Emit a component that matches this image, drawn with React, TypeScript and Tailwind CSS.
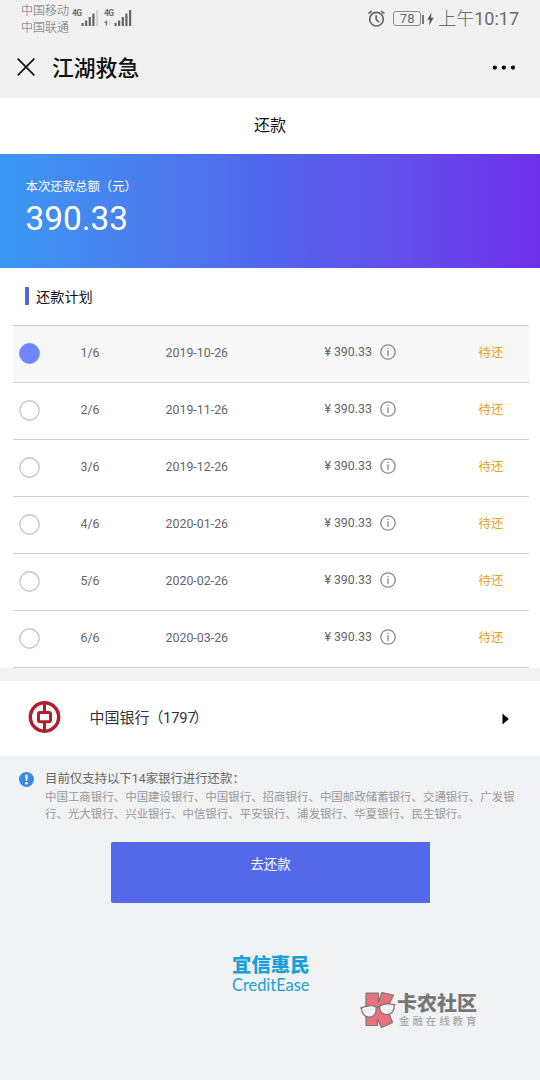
import React from 'react';

interface Installment {
  term: string;
  date: string;
  amount: string;
  active?: boolean;
}

const installments: Installment[] = [
  { term: '1/6', date: '2019-10-26', amount: '390.33', active: true },
  { term: '2/6', date: '2019-11-26', amount: '390.33' },
  { term: '3/6', date: '2019-12-26', amount: '390.33' },
  { term: '4/6', date: '2020-01-26', amount: '390.33' },
  { term: '5/6', date: '2020-02-26', amount: '390.33' },
  { term: '6/6', date: '2020-03-26', amount: '390.33' },
];

function SignalBars({ weak }: { weak?: boolean }) {
  return (
    <svg width="18" height="18" viewBox="0 0 18 18" fill="#666">
      <rect x="0.5" y="14" width="2.2" height="3" />
      <rect x="4" y="11.5" width="2.2" height="5.5" />
      <rect x="7.7" y="8" width="2.2" height="9" />
      <rect x="11.3" y="4.5" width="2.2" height="12.5" />
      <rect x="15" y="1" width="2.2" height="16" fill={weak ? '#d2d2d2' : '#666'} />
    </svg>
  );
}

function StatusBar() {
  return (
    <div className="flex h-[38px] justify-between pl-[21px] pr-[21px] text-[#6b6b6b]">
      <div className="flex">
        <div className="w-[51px] pt-[3px] text-[12px] leading-[16.5px] font-light whitespace-nowrap">
          <div>中国移动</div>
          <div>中国联通</div>
        </div>
        <div className="flex pt-[9px]">
          <span className="w-[9px] text-[8.5px] leading-[9px] font-bold tracking-[-0.7px]">4G</span>
          <SignalBars weak />
        </div>
        <div className="flex pt-[9px] pl-[5px]">
          <div className="w-[10px]">
            <div className="text-[8.5px] leading-[9px] font-bold tracking-[-0.7px]">4G</div>
            <svg className="mt-[2px]" width="8" height="6" viewBox="0 0 8 6">
              <path d="M0 3 3 0V5.5H1.8V3Z" fill="#666" />
              <path d="M5 0.5V5.5L7.5 3.5H6V0.5Z" fill="#ccc" />
            </svg>
          </div>
          <SignalBars />
        </div>
      </div>
      <div className="flex items-center">
        <svg width="18" height="18" viewBox="0 0 18 18" fill="none" stroke="#666" strokeWidth="1.7">
          <circle cx="9.5" cy="9.2" r="6.8" />
          <path d="M9.2 5.2V9.5L12 12.1M1.5 3.6 4.7 1M17.3 3.6 14.1 1" />
        </svg>
        <div className="mb-[1px] ml-[8px] flex h-[15px] w-[28px] items-center justify-center rounded-[3px] border border-[#8a8a8a] text-[13px] leading-none">
          78
        </div>
        <div className="ml-[1px] h-[9px] w-[2px] bg-[#777]" />
        <svg className="ml-[3px]" width="7" height="14" viewBox="0 0 7 14" fill="#555">
          <path d="M4.5 0.5 0.3 7.8H2.8L2 13.5 6.7 5.8H4Z" />
        </svg>
        <span className="ml-[4px] text-[18px] leading-[24px] font-light whitespace-nowrap">
          上午<span className="font-normal">10:17</span>
        </span>
      </div>
    </div>
  );
}

function AppHeader() {
  return (
    <div className="flex h-[60px] items-center pl-[17px] pr-[24px]">
      <svg className="mb-[2px]" width="18" height="18" viewBox="0 0 18 18" stroke="#111" strokeWidth="1.7">
        <path d="M0.7 0.7 17.3 17.3M17.3 0.7 0.7 17.3" />
      </svg>
      <h1 className="ml-[17px] flex-1 pt-[1px] text-[21.8px] leading-[30px] font-medium text-[#111]">江湖救急</h1>
      <svg width="24" height="6" viewBox="0 0 24 6" fill="#000">
        <circle cx="2.8" cy="2.6" r="2.1" />
        <circle cx="11.9" cy="2.6" r="2.1" />
        <circle cx="21" cy="2.6" r="2.1" />
      </svg>
    </div>
  );
}

function InfoIcon() {
  return (
    <svg width="16" height="16" viewBox="0 0 16 16" fill="none" stroke="#888" strokeWidth="1.3">
      <circle cx="8" cy="8" r="7.2" />
      <path d="M8 6.3V12M8 3.8V5.1" />
    </svg>
  );
}

function RadioDot({ active }: { active?: boolean }) {
  return (
    <svg width="21" height="21" viewBox="0 0 21 21" strokeWidth="1.4">
      <circle
        cx="10.5"
        cy="10.5"
        r="9.7"
        fill={active ? '#7185ff' : '#fff'}
        stroke={active ? '#7185ff' : '#c8c8c8'}
      />
    </svg>
  );
}

function InstallmentRow({ item }: { item: Installment }) {
  return (
    <div
      className={`flex h-[57px] items-center border-t border-[#d0d0d0] pb-[2px] pl-[6px] text-[12.4px] leading-[16px] text-[#666] ${
        item.active ? 'bg-[#f7f7f7]' : 'bg-white'
      }`}
    >
      <RadioDot active={item.active} />
      <div className="ml-[40.5px] w-[85px] pb-[1px]">{item.term}</div>
      <div className="w-[157px] pb-[1px]">{item.date}</div>
      <div className="flex w-[49.5px] justify-end pb-[2px] whitespace-nowrap">
        <span className="mr-[3px]">¥</span>
        <span>{item.amount}</span>
      </div>
      <div className="ml-[8px] pb-[2px]">
        <InfoIcon />
      </div>
      <div className="ml-[82.5px] pb-[1px] text-[#e8a020]">待还</div>
    </div>
  );
}

function BankLogo() {
  return (
    <svg className="mb-[3px]" width="33" height="32" viewBox="0 0 33 32" fill="none" stroke="#b1202a">
      <circle cx="16.5" cy="16" r="14.2" strokeWidth="3.4" />
      <path d="M16.5 2V11M16.5 21V30" strokeWidth="3" />
      <rect x="10.5" y="11.4" width="12" height="9.4" rx="1.5" strokeWidth="3" />
    </svg>
  );
}

function CommunityMark() {
  return (
    <svg width="36" height="38" viewBox="0 0 36 38" stroke="#777" strokeWidth="1.2">
      <path
        d="M6 2H18.5V11L22 1.5 33.5 4 27 17.5 32.5 31.5 21.5 36.5 17.5 28V34.5H6Z"
        fill="#e8727b"
        strokeLinejoin="round"
      />
      <path d="M1.5 17C5 14.5 13 14 16 16 17 22 14 26 9 26 4 26 1.5 22 1.5 17Z" fill="#f3f1f2" />
      <path d="M19.5 15.5C23 12.5 31 12 34 14 35 19 32 23.5 27 23.5 22 23.5 19.5 20.5 19.5 15.5Z" fill="#f3f1f2" />
      <path d="M0 17 2 17M16 17 20 16M34 14 35.5 13" fill="none" />
    </svg>
  );
}

export default function App() {
  return (
    <div className="flex h-[1080px] w-[540px] flex-col overflow-hidden bg-[#f0f2f4] font-['Roboto','Noto_Sans_CJK_SC',sans-serif]">
      <div className="bg-[#f1f1f1]">
        <StatusBar />
        <AppHeader />
      </div>

      <div className="flex h-[56px] items-center justify-center bg-white text-[16px] text-[#111]">还款</div>

      <div className="h-[114px] bg-linear-to-r from-[#3a98f1] via-[#5264ec] to-[#6d2fe8] pt-[24px] pl-[25.5px] text-white">
        <div className="text-[12.4px] leading-[18px]">本次还款总额（元）</div>
        <div className="mt-[2px] text-[33.3px] leading-[42px]">390.33</div>
      </div>

      <div className="bg-white pr-[11px] pl-[13px]">
        <div className="flex h-[57px] items-center pl-[12px]">
          <div className="mb-[2px] h-[18px] w-[4px] bg-[#5468e0]" />
          <span className="ml-[7px] text-[14.2px] leading-[20px] text-[#111]">还款计划</span>
        </div>
        <div className="border-b border-[#d0d0d0]">
          {installments.map((item) => (
            <InstallmentRow key={item.term} item={item} />
          ))}
        </div>
      </div>

      {/* 银行卡 */}
      <div className="mt-[13px] flex h-[75px] items-center bg-white pr-[31px] pl-[28px]">
        <BankLogo />
        <span className="ml-[28.5px] flex-1 pb-[1px] text-[15px] leading-[22px] text-[#333]">
          中国银行<span className="ml-[-1px]">（</span>
          <span className="ml-[-0.5px] text-[14.8px] tracking-[-0.2px]">1797</span>
          <span className="ml-[-2px]">）</span>
        </span>
        <svg width="7" height="12" viewBox="0 0 7 12">
          <path d="M0.5 0.5 6.8 6 0.5 11.5Z" fill="#000" />
        </svg>
      </div>

      <div className="flex pt-[14px] pl-[19px]">
        <svg className="mt-[2px]" width="15" height="15" viewBox="0 0 15 15">
          <circle cx="7.5" cy="7.5" r="7.5" fill="#3a8bdc" />
          <path d="M6.3 2.8H8.7L8.2 9H6.8Z" fill="#fff" />
          <circle cx="7.5" cy="11.2" r="1.2" fill="#fff" />
        </svg>
        <div className="ml-[11px] w-[474px]">
          <div className="text-[12.4px] leading-[18px] text-[#666]">目前仅支持以下14家银行进行还款：</div>
          <div className="pt-[1px] text-[11.46px] leading-[17px] whitespace-nowrap text-[#999]">
            中国工商银行、中国建设银行、中国银行、招商银行、中国邮政储蓄银行、交通银行、广发银
            <br />
            行、光大银行、兴业银行、中信银行、平安银行、浦发银行、华夏银行、民生银行。
          </div>
        </div>
      </div>

      <button className="mt-[19px] ml-[111px] flex h-[61px] w-[319px] justify-center rounded-l-[2px] bg-[#5469ea] pt-[13px] text-[13.4px] leading-[20px] text-white">
        去还款
      </button>

      <div className="mt-[52px] ml-[232px] w-[80px] text-[#1c9fd8]">
        <div className="text-[19.4px] leading-[22px] font-black whitespace-nowrap">宜信惠民</div>
        <div className="font-['Lato','Noto_Sans_CJK_SC',sans-serif] text-[16.4px] leading-[15px] whitespace-nowrap">CreditEase</div>
      </div>

      <div className="mt-[-1px] ml-[360px] flex">
        <CommunityMark />
        <div className="ml-[1px] pt-[1px] whitespace-nowrap">
          <div className="text-[20px] leading-[24px] font-black text-[#777]">卡农社区</div>
          <div className="ml-[2px] text-[10.5px] leading-[11px] font-medium tracking-[2.9px] text-[#aaa]">金融在线教育</div>
        </div>
      </div>
    </div>
  );
}
